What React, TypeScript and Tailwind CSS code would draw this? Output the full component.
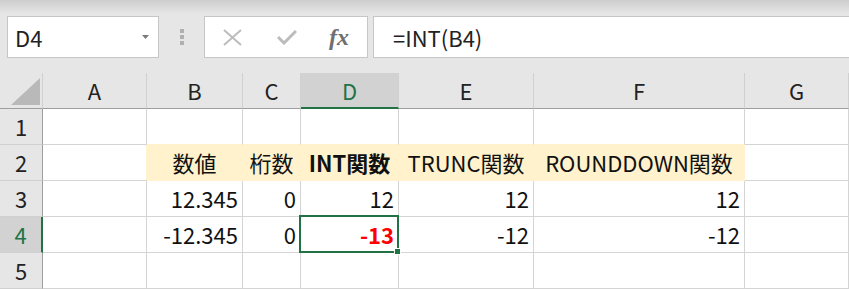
import { ReactNode } from 'react';

const FONT = { fontFamily: '"Noto Sans CJK JP", "Noto Sans", sans-serif' };

const COLUMNS = ['A', 'B', 'C', 'D', 'E', 'F', 'G'];

type Cell = { text?: string; bold?: boolean; red?: boolean; center?: boolean };

// rows 1..5, columns A..G
const ROWS: Cell[][] = [
  [{}, {}, {}, {}, {}, {}, {}],
  [
    {},
    { text: '数値', center: true },
    { text: '桁数', center: true },
    { text: 'INT関数', center: true, bold: true },
    { text: 'TRUNC関数', center: true },
    { text: 'ROUNDDOWN関数', center: true },
    {},
  ],
  [{}, { text: '12.345' }, { text: '0' }, { text: '12' }, { text: '12' }, { text: '12' }, {}],
  [{}, { text: '-12.345' }, { text: '0' }, { text: '-13', bold: true, red: true }, { text: '-12' }, { text: '-12' }, {}],
  [{}, {}, {}, {}, {}, {}, {}],
];

function isYellow(r: number, c: number) {
  return r === 1 && c >= 1 && c <= 5;
}

function cellBorder(r: number, c: number) {
  // fill hides the grid lines on its own edges
  const right = isYellow(r, c) || isYellow(r, c + 1) ? 'border-r-[#fff2cc]' : 'border-r-[#d4d4d4]';
  const bottom = isYellow(r, c) || isYellow(r + 1, c) ? 'border-b-[#fff2cc]' : 'border-b-[#d4d4d4]';
  return `${right} ${bottom}`;
}

function HeaderCell({ children, selected }: { children?: ReactNode; selected?: boolean }) {
  return (
    <div
      className={`flex h-9 items-center justify-center border-r border-b border-r-[#d0d0d0] text-[22px] ${
        selected
          ? 'border-b-2 border-b-[#217346] bg-[#d2d2d2] text-[#217346]'
          : 'border-b-[#9e9e9e] bg-[#e6e6e6] text-[#222]'
      }`}
    >
      {children}
    </div>
  );
}

function RowHeader({ n, selected }: { n: number; selected?: boolean }) {
  return (
    <div
      className={`flex h-9 items-center justify-center border-b border-b-[#d0d0d0] text-[22px] ${
        selected
          ? 'border-r-2 border-r-[#217346] bg-[#d2d2d2] text-[#217346]'
          : 'border-r border-r-[#9e9e9e] bg-[#e6e6e6] text-[#222]'
      }`}
    >
      {n}
    </div>
  );
}

function FormulaBar() {
  return (
    <div className="h-[73px] bg-[linear-gradient(to_bottom,#cdcdcd_0px,#e6e6e6_14px)] pt-4">
      <div className="flex h-[42px] items-stretch">
        <div className="ml-[7px] flex w-[152px] items-center justify-between border border-[#c6c6c6] bg-white pl-[7px] pr-[9px]">
          <span className="text-[22px] text-[#222]">D4</span>
          <svg width="7" height="4" viewBox="0 0 7 4">
            <path d="M0 0 L7 0 L3.5 4 Z" fill="#7a7a7a" />
          </svg>
        </div>
        <div className="flex w-[45px] flex-col items-center justify-center gap-[2px]">
          <span className="h-[4px] w-[4px] bg-[#b0b0b0]" />
          <span className="h-[4px] w-[4px] bg-[#b0b0b0]" />
          <span className="h-[4px] w-[4px] bg-[#b0b0b0]" />
        </div>
        <div className="flex w-[164px] items-center border border-[#c6c6c6] bg-white">
          <svg className="ml-[18px]" width="19" height="17" viewBox="0 0 19 17">
            <path d="M1 1 L18 16 M18 1 L1 16" stroke="#bcbcbc" strokeWidth="2" />
          </svg>
          <svg className="ml-[35px]" width="20" height="15" viewBox="0 0 20 15">
            <path d="M1 7 L7 13 L19 1" stroke="#bcbcbc" strokeWidth="3" fill="none" />
          </svg>
          <span
            className="ml-[32px] text-[24px] font-bold italic leading-none text-[#6f6f6f]"
            style={{ fontFamily: '"Liberation Serif", "DejaVu Serif", serif' }}
          >
            fx
          </span>
        </div>
        <div className="ml-[5px] flex flex-1 items-center border border-r-0 border-[#c6c6c6] bg-white pl-[19px]">
          <span className="text-[22px] text-[#222]">=INT(B4)</span>
        </div>
      </div>
    </div>
  );
}

export default function App() {
  return (
    <div className="h-[289px] w-[849px] overflow-hidden bg-white" style={FONT}>
      <FormulaBar />
      <div className="grid grid-cols-[43px_104px_96px_58px_98px_135px_211px_104px]">
        <div className="relative h-9 border-r border-b border-r-[#d0d0d0] border-b-[#9e9e9e] bg-[#e6e6e6]">
          <svg className="absolute left-[11px] top-[5px]" width="29" height="27" viewBox="0 0 29 27">
            <path d="M29 0 L29 27 L0 27 Z" fill="#b9b9b9" />
          </svg>
        </div>
        {COLUMNS.map((col) => (
          <HeaderCell key={col} selected={col === 'D'}>
            {col}
          </HeaderCell>
        ))}

        {ROWS.map((row, r) => (
          <div key={r} className="contents">
            <RowHeader n={r + 1} selected={r === 3} />
            {row.map((cell, c) => (
              <div
                key={c}
                className={`relative flex h-9 items-center border-r border-b px-[4px] text-[22px] ${cellBorder(r, c)} ${
                  isYellow(r, c) ? 'bg-[#fff2cc]' : 'bg-white'
                } ${cell.center ? 'justify-center' : 'justify-end'} ${cell.bold ? 'font-bold' : ''} ${
                  cell.red ? 'text-[#ff0000]' : 'text-[#111]'
                }`}
              >
                <span className="whitespace-nowrap">{cell.text}</span>
                {r === 3 && c === 3 && (
                  <div className="pointer-events-none absolute -top-[2px] -left-[2px] -right-[1px] -bottom-[1px] z-10 border-2 border-[#217346]">
                    <div className="absolute -right-[4px] -bottom-[4px] h-[7px] w-[7px] border border-white bg-[#217346]" />
                  </div>
                )}
              </div>
            ))}
          </div>
        ))}
      </div>
    </div>
  );
}
